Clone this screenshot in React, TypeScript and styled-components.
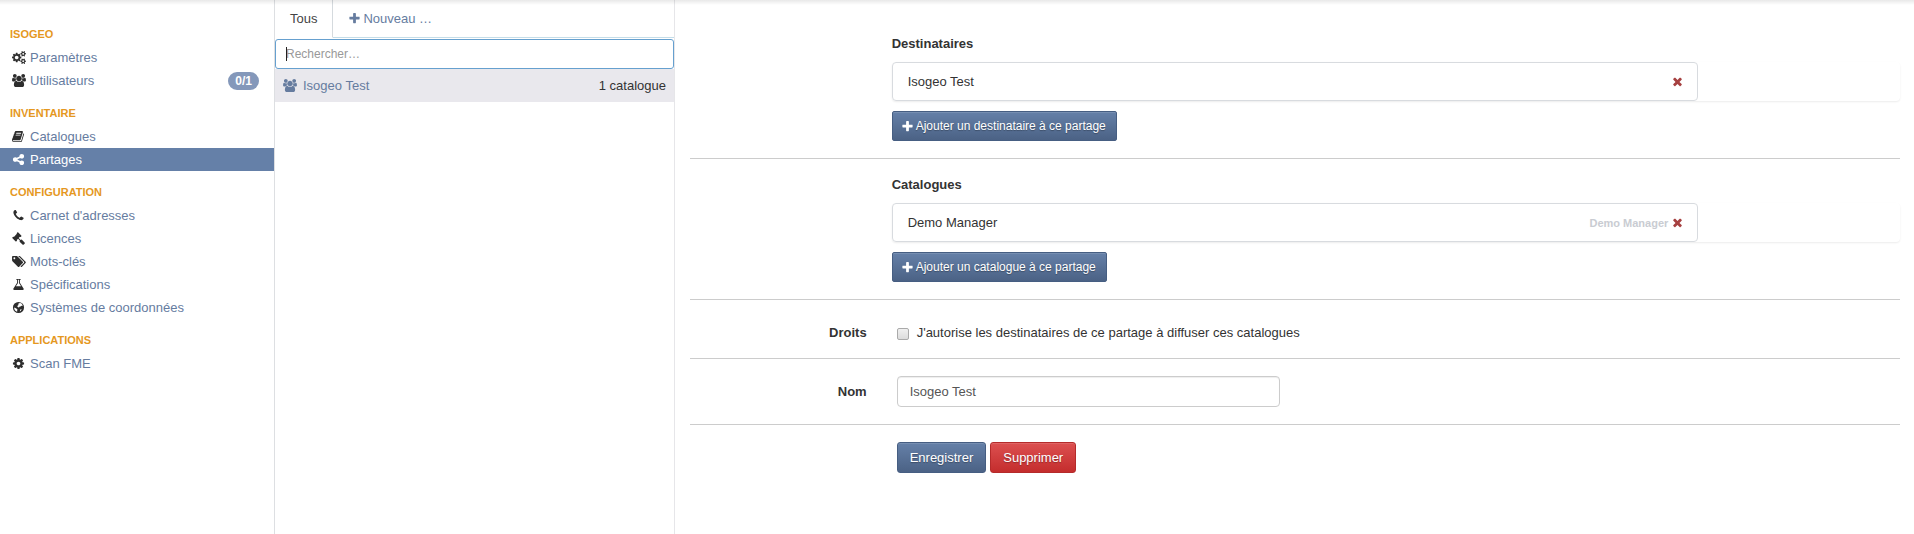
import React from "react";
import styled, { createGlobalStyle, css } from "styled-components";

const GlobalStyle = createGlobalStyle`
  *, *::before, *::after { box-sizing: border-box; }
  body {
    margin: 0;
    background: #fff;
    color: #333;
    font-family: "Liberation Sans", Arial, sans-serif;
    font-size: 13px;
    line-height: 18px;
  }
  a { color: #667c9f; text-decoration: none; }
  button, input { font: inherit; }
`;

type Glyph = { width: number; path: string };

const smallGear =
  "v140q0 16-149 31-12 27-30 52 51 113 51 138 0 4-4 7-122 71-124 71-8 0-46-47t-52-68q-20 2-30 2t-30-2q-14 21-52 68t-46 47q-2 0-124-71-4-3-4-7 0-25 51-138-18-25-30-52-149-15-149-31v-140q0-16 149-31 13-29 30-52-51-113-51-138 0-4 4-7 4-2 35-20t59-34 30-16q8 0 46 46.5t52 67.5q20-2 30-2t30 2q51-71 92-112l6-2q4 0 124 70 4 3 4 7 0 25-51 138 17 23 30 52 149 15 149 31z";

const glyphs = {
  cogs: {
    width: 1920,
    path:
      "M896 896q0-106-75-181t-181-75-181 75-75 181 75 181 181 75 181-75 75-181zm768 512q0-52-38-90t-90-38-90 38-38 90q0 53 37.5 90.5t90.5 37.5 90.5-37.5 37.5-90.5zm0-1024q0-52-38-90t-90-38-90 38-38 90q0 53 37.5 90.5t90.5 37.5 90.5-37.5 37.5-90.5zm-384 421v185q0 10-7 19.5t-16 10.5l-155 24q-11 35-32 76 34 48 90 115 7 10 7 20 0 12-7 19-23 30-82.5 89.5t-78.5 59.5q-11 0-21-7l-115-90q-37 19-77 31-11 108-23 155-7 24-30 24h-186q-11 0-20-7.5t-10-17.5l-23-153q-34-10-75-31l-118 89q-7 7-20 7-11 0-21-8-144-133-144-160 0-9 7-19 10-14 41-53t47-61q-23-44-35-82l-152-24q-10-1-17-9.5t-7-19.5v-185q0-10 7-19.5t16-10.5l155-24q11-35 32-76-34-48-90-115-7-11-7-20 0-12 7-20 22-30 82-89t79-59q11 0 21 7l115 90q34-18 77-32 11-108 23-154 7-24 30-24h186q11 0 20 7.5t10 17.5l23 153q34 10 75 31l118-89q8-7 20-7 11 0 21 8 144 133 144 160 0 9-7 19-12 16-42 54t-45 60q23 48 34 82l152 23q10 2 17 10.5t7 19.5z" +
      "M1920 1338" + smallGear + "M1920 314" + smallGear,
  },
  users: {
    width: 1920,
    path: "M593 896q-162 5-265 128h-134q-82 0-138-40.5t-56-118.5q0-353 124-353 6 0 43.5 21t97.5 42.5 119 21.5q67 0 133-23-5 37-5 66 0 139 81 256zm1071 637q0 120-73 189.5t-194 69.5h-874q-121 0-194-69.5t-73-189.5q0-53 3.5-103.5t14-109 26.5-108.5 43-97.5 62-81 85.5-53.5 111.5-20q10 0 43 21.5t73 48 107 48 135 21.5 135-21.5 107-48 73-48 43-21.5q61 0 111.5 20t85.5 53.5 62 81 43 97.5 26.5 108.5 14 109 3.5 103.5zm-1024-1277q0 106-75 181t-181 75-181-75-75-181 75-181 181-75 181 75 75 181zm704 384q0 159-112.5 271.5t-271.5 112.5-271.5-112.5-112.5-271.5 112.5-271.5 271.5-112.5 271.5 112.5 112.5 271.5zm576 225q0 78-56 118.5t-138 40.5h-134q-103-123-265-128 81-117 81-256 0-29-5-66 66 23 133 23 59 0 119-21.5t97.5-42.5 43.5-21q124 0 124 353zm-128-609q0 106-75 181t-181 75-181-75-75-181 75-181 181-75 181 75 75 181z",
  },
  book: {
    width: 1792,
    path: "M1639 478q40 57 18 129l-275 906q-19 64-76.5 107.5t-122.5 43.5h-923q-77 0-148.5-53.5t-99.5-131.5q-24-67-2-127 0-4 3-27t4-37q1-8-3-21.5t-3-19.5q2-11 8-21t16.5-23.5 16.5-23.5q23-38 45-91.5t30-91.5q3-10 .5-30t-.5-28q3-11 17-28t17-23q21-36 42-92t25-90q1-9-2.5-32t.5-28q4-13 22-30.5t22-22.5q19-26 42.5-84.5t27.5-96.5q1-8-3-25.5t-2-26.5q2-8 9-18t18-23 17-21q8-12 16.5-30.5t15-35 16-36 19.5-32 26.5-23.5 36-11.5 47.5 5.5l-1 3q38-9 51-9h761q74 0 114 56t18 130l-274 906q-36 119-71.5 153.5t-128.5 34.5h-869q-27 0-38 15-11 16-1 43 24 70 144 70h923q29 0 56-15.5t35-41.5l300-987q7-22 5-57 38 15 59 43zm-1064 2q-4 13 2 22.5t20 9.5h608q13 0 25.5-9.5t16.5-22.5l21-64q4-13-2-22.5t-20-9.5h-608q-13 0-25.5 9.5t-16.5 22.5zm-83 256q-4 13 2 22.5t20 9.5h608q13 0 25.5-9.5t16.5-22.5l21-64q4-13-2-22.5t-20-9.5h-608q-13 0-25.5 9.5t-16.5 22.5z",
  },
  share: {
    width: 1792,
    path: "M1344 1024q133 0 226.5 93.5t93.5 226.5-93.5 226.5-226.5 93.5-226.5-93.5-93.5-226.5q0-12 2-34l-360-180q-92 86-218 86-133 0-226.5-93.5t-93.5-226.5 93.5-226.5 226.5-93.5q126 0 218 86l360-180q-2-22-2-34 0-133 93.5-226.5t226.5-93.5 226.5 93.5 93.5 226.5-93.5 226.5-226.5 93.5q-126 0-218-86l-360 180q2 22 2 34t-2 34l360 180q92-86 218-86z",
  },
  phone: {
    width: 1792,
    path: "M1600 1240q0 27-10 70.5t-21 68.5q-21 50-122 106-94 51-186 51-27 0-53-3.5t-57.5-12.5-47-14.5-55.5-20.5-49-18q-98-35-175-83-127-79-264-216t-216-264q-48-77-83-175-3-9-18-49t-20.5-55.5-14.5-47-12.5-57.5-3.5-53q0-92 51-186 56-101 106-122 25-11 68.5-21t70.5-10q14 0 21 3 18 6 53 76 11 19 30 54t35 63.5 31 53.5q3 4 17.5 25t21.5 35.5 7 28.5q0 20-28.5 50t-62 55-62 53-28.5 46q0 9 5 22.5t8.5 20.5 14 24 11.5 19q76 137 174 235t235 174q2 1 19 11.5t24 14 20.5 8.5 22.5 5q18 0 46-28.5t53-62 55-62 50-28.5q14 0 28.5 7t35.5 21.5 25 17.5q25 15 53.5 31t63.5 35 54 30q70 35 76 53 3 7 3 21z",
  },
  gavel: {
    width: 1792,
    path: "M1771 1536q0 53-37 90l-107 108q-39 37-91 37-53 0-90-37l-363-364q-38-36-38-90 0-53 43-96l-256-256-126 126q-14 14-34 14t-34-14q2 2 12.5 12t12.5 13 10 11.5 10 13.5 6 13.5 5.5 16.5 1.5 18q0 38-28 68-3 3-16.5 18t-19 20.5-18.5 16.5-22 15.5-22 9-26 4.5q-40 0-68-28l-408-408q-28-28-28-68 0-13 4.5-26t9-22 15.5-22 16.5-18.5 20.5-19 18-16.5q30-28 68-28 10 0 18 1.5t16.5 5.5 13.5 6 13.5 10 11.5 10 13 12.5 12 12.5q-14-14-14-34t14-34l348-348q14-14 34-14t34 14q-2-2-12.5-12t-12.5-13-10-11.5-10-13.5-6-13.5-5.5-16.5-1.5-18q0-38 28-68 3-3 16.5-18t19-20.5 18.5-16.5 22-15.5 22-9 26-4.5q40 0 68 28l408 408q28 28 28 68 0 13-4.5 26t-9 22-15.5 22-16.5 18.5-20.5 19-18 16.5q-30 28-68 28-10 0-18-1.5t-16.5-5.5-13.5-6-13.5-10-11.5-10-13-12.5-12-12.5q14 14 14 34t-14 34l-126 126 256 256q43-43 96-43 52 0 91 37l363 363q37 39 37 91z",
  },
  tags: {
    width: 1920,
    path: "M448 448q0-53-37.5-90.5t-90.5-37.5-90.5 37.5-37.5 90.5 37.5 90.5 90.5 37.5 90.5-37.5 37.5-90.5zm1067 576q0 53-37 90l-491 492q-39 37-91 37-53 0-90-37l-715-716q-38-37-64.5-101t-26.5-117v-416q0-52 38-90t90-38h416q53 0 117 26.5t102 64.5l715 714q37 39 37 91zm384 0q0 53-37 90l-491 492q-39 37-91 37-36 0-59-14t-53-45l470-470q37-37 37-90 0-52-37-91l-715-714q-38-38-102-64.5t-117-26.5h224q53 0 117 26.5t102 64.5l715 714q37 39 37 91z",
  },
  flask: {
    width: 1792,
    path: "M1591 1448q56 89 21.5 152.5t-140.5 63.5h-1152q-106 0-140.5-63.5t21.5-152.5l503-793v-399h-64q-26 0-45-19t-19-45 19-45 45-19h512q26 0 45 19t19 45-19 45-45 19h-64v399zm-779-725l-272 429h712l-272-429-20-31v-436h-128v436z",
  },
  globe: {
    width: 1792,
    path: "M896 128a768 768 0 1 0 0 1536a768 768 0 1 0 0-1536zM950 300L1150 270L1340 390L1470 570L1400 700L1280 650L1180 770L1060 760L960 880L830 860L720 740L800 620L900 540L860 420ZM310 880L480 960L650 1060L760 1200L700 1340L720 1480L560 1420L400 1260L310 1080ZM1130 1180L1270 1120L1330 1180L1210 1360L1080 1450Z",
  },
  cog: {
    width: 1792,
    path: "M1152 896q0-106-75-181t-181-75-181 75-75 181 75 181 181 75 181-75 75-181zm512-109v222q0 12-8 23t-20 13l-185 28q-19 54-39 91 35 50 107 138 10 12 10 25t-9 23q-27 37-99 108t-94 71q-12 0-26-9l-138-108q-44 23-91 38-16 136-29 186-7 28-36 28h-222q-14 0-24.5-8.5t-11.5-21.5l-28-184q-49-16-90-37l-141 107q-10 9-25 9-14 0-25-11-126-114-165-168-7-10-7-23 0-12 8-23 15-21 51-66.5t54-70.5q-27-50-41-99l-183-27q-13-2-21-12.5t-8-23.5v-222q0-12 8-23t19-13l186-28q14-46 39-92-40-57-107-138-10-12-10-24 0-10 9-23 26-36 98.5-107.5t94.5-71.5q13 0 26 10l138 107q44-23 91-38 16-136 29-186 7-28 36-28h222q14 0 24.5 8.5t11.5 21.5l28 184q49 16 90 37l142-107q9-9 24-9 13 0 25 10 129 119 165 170 7 8 7 22 0 12-8 23-15 21-51 66.5t-54 70.5q26 50 41 98l183 28q13 2 21 12.5t8 23.5z",
  },
  plus: {
    width: 1792,
    path: "M1600 736v192q0 40-28 68t-68 28h-416v416q0 40-28 68t-68 28h-192q-40 0-68-28t-28-68v-416h-416q-40 0-68-28t-28-68v-192q0-40 28-68t68-28h416v-416q0-40 28-68t68-28h192q40 0 68 28t28 68v416h416q40 0 68 28t28 68z",
  },
  times: {
    width: 1792,
    path: "M1490 1322q0 40-28 68l-136 136q-28 28-68 28t-68-28l-294-294-294 294q-28 28-68 28t-68-28l-136-136q-28-28-28-68t28-68l294-294-294-294q-28-28-28-68t28-68l136-136q28-28 68-28t68 28l294 294 294-294q28-28 68-28t68 28l136 136q28 28 28 68t-28 68l-294 294 294 294q28 28 28 68z",
  },
} satisfies Record<string, Glyph>;

type GlyphName = keyof typeof glyphs;

const IconSvg = styled.svg`
  flex: none;
  height: 13px;
  fill: currentColor;
`;

function Icon({ name }: { name: GlyphName }) {
  const glyph = glyphs[name];
  return (
    <IconSvg
      viewBox={`0 0 ${glyph.width} 1792`}
      width={glyph.width > 1792 ? 14 : 13}
      aria-hidden="true"
      fillRule={name === "globe" ? "evenodd" : "nonzero"}
    >
      <path d={glyph.path} />
    </IconSvg>
  );
}

const Page = styled.div`
  position: relative;
  display: grid;
  grid-template-columns: 275px 400px 1fr;
  min-height: 100vh;
`;

const TopShadow = styled.div`
  position: absolute;
  inset: 0 0 auto;
  height: 5px;
  background: linear-gradient(rgba(0, 0, 0, 0.09), rgba(0, 0, 0, 0));
  pointer-events: none;
`;

const Sidebar = styled.nav`
  padding-top: 23px;
  border-right: 1px solid #dddfe2;
`;

const Group = styled.section`
  margin-bottom: 10px;
`;

const GroupTitle = styled.h2`
  margin: 0;
  padding-left: 10px;
  color: #e5981f;
  font-size: 11px;
  line-height: 23px;
  text-transform: uppercase;
`;

const Menu = styled.ul`
  margin: 0;
  padding: 0;
  list-style: none;
`;

const MenuLink = styled.a<{ $active?: boolean }>`
  display: flex;
  align-items: center;
  height: 23px;
  padding: 0 15px 0 10px;
  ${(p) => p.$active && css`
    background: #6580a8;
    color: #fff;
  `}
`;

const MenuIcon = styled.span<{ $active?: boolean }>`
  display: flex;
  justify-content: center;
  width: 17px;
  margin-right: 3px;
  color: ${(p) => (p.$active ? "#fff" : "#2d2d2d")};
`;

const Badge = styled.span`
  margin-left: auto;
  padding: 0 7px;
  border-radius: 9px;
  background: #8498ba;
  color: #fff;
  font-size: 12px;
  font-weight: bold;
`;

const ListPanel = styled.section`
  border-right: 1px solid #e6e6e9;
`;

const Tabs = styled.div`
  display: flex;
  height: 38px;
  margin-bottom: 1px;
`;

const Tab = styled.a<{ $active?: boolean }>`
  display: flex;
  align-items: center;
  gap: 2px;
  padding: 0 15px;
  border-bottom: 1px solid #c5dde8;
  ${(p) => p.$active && css`
    border-right: 1px solid #d5dade;
    border-bottom-color: transparent;
    color: #444;
  `}
`;

const TabFill = styled.div`
  flex: 1;
  border-bottom: 1px solid #c5dde8;
`;

const SearchBox = styled.div`
  position: relative;
`;

const SearchInput = styled.input`
  display: block;
  width: 100%;
  height: 30px;
  padding: 0 10px;
  border: 1px solid #66a0cf;
  border-radius: 3px;
  outline: none;
  background: #fff;
  color: #555;
  font-size: 12px;
  &::placeholder { color: #999; opacity: 1; }
`;

const Caret = styled.span`
  position: absolute;
  top: 8px;
  left: 11px;
  width: 1px;
  height: 14px;
  background: #222;
`;

const ResultRow = styled.a`
  display: flex;
  align-items: center;
  gap: 6px;
  height: 33px;
  padding: 0 8px;
  background: #e9e8ed;
`;

const ResultCount = styled.span`
  margin-left: auto;
  color: #333;
`;

const Main = styled.main`
  padding: 35px 14px 20px 15px;
`;

const ShareSection = styled.section`
  margin-left: calc(100% / 6);
`;

const SectionTitle = styled.h3`
  margin: 0 0 9px;
  font-size: 13px;
  line-height: 18px;
`;

const CardList = styled.ul`
  margin: 0 0 10px;
  padding: 0;
  border-radius: 4px;
  box-shadow: 0 1px 2px rgba(0, 0, 0, 0.08);
  list-style: none;
`;

const Card = styled.li`
  display: flex;
  align-items: center;
  width: 80%;
  height: 39px;
  padding: 0 13px 0 15px;
  border: 1px solid #d8dbdf;
  border-radius: 4px;
`;

const CardNote = styled.span`
  color: #c9ccd2;
  font-size: 11px;
  font-weight: bold;
  line-height: 16px;
`;

const CardActions = styled.div`
  display: flex;
  align-items: center;
  gap: 3px;
  margin-left: auto;
`;

const RemoveButton = styled.button`
  display: flex;
  padding: 0;
  border: 0;
  background: none;
  color: #a64040;
`;

const Button = styled.button<{ $tone?: "danger"; $small?: boolean }>`
  display: inline-flex;
  align-items: center;
  justify-content: center;
  height: 31px;
  padding: 0 12px;
  border: 1px solid #465e82;
  border-radius: 3px;
  background: linear-gradient(#6580a8, #4b6285);
  box-shadow: inset 0 1px 0 rgba(255, 255, 255, 0.12);
  color: #fff;
  text-shadow: 0 1px 1px rgba(0, 0, 0, 0.3);
  white-space: nowrap;
  ${(p) => p.$tone === "danger" && css`
    border-color: #b52b2b;
    background: linear-gradient(#dc5050, #c42d2d);
  `}
  ${(p) => p.$small && css`
    gap: 2px;
    height: 30px;
    padding: 0 10px 0 8px;
    border-radius: 2px;
    font-size: 12px;
  `}
`;

const Divider = styled.hr`
  height: 1px;
  margin: 17px 0;
  border: 0;
  background: #ccc;
`;

const FormRow = styled.div`
  display: grid;
  grid-template-columns: 2fr 4fr 6fr;
  margin: 0 -15px;
`;

const FormLabel = styled.label`
  padding: 7px 15px 0;
  font-weight: bold;
  line-height: 17px;
  text-align: right;
`;

const FormField = styled.div<{ $wide?: boolean }>`
  grid-column: ${(p) => (p.$wide ? "2 / 4" : "2")};
  padding: 0 15px;
`;

const CheckLabel = styled.label`
  display: flex;
  gap: 8px;
  padding-top: 7px;
  line-height: 17px;
`;

const Checkbox = styled.input`
  appearance: none;
  flex: none;
  width: 12px;
  height: 12px;
  margin: 4px 0 0;
  border: 1px solid #aaa;
  border-radius: 2px;
  background: linear-gradient(#f0f0f0, #dcdcdc);
`;

const TextInput = styled.input`
  display: block;
  width: 100%;
  height: 31px;
  padding: 0 12px;
  border: 1px solid #ccc;
  border-radius: 4px;
  box-shadow: inset 0 1px 1px rgba(0, 0, 0, 0.07);
  color: #555;
`;

const ButtonBar = styled.div`
  display: flex;
  gap: 4px;
`;

type MenuEntry = { icon: GlyphName; label: string; badge?: string; active?: boolean };

const menuGroups: { title: string; entries: MenuEntry[] }[] = [
  {
    title: "Isogeo",
    entries: [
      { icon: "cogs", label: "Paramètres" },
      { icon: "users", label: "Utilisateurs", badge: "0/1" },
    ],
  },
  {
    title: "Inventaire",
    entries: [
      { icon: "book", label: "Catalogues" },
      { icon: "share", label: "Partages", active: true },
    ],
  },
  {
    title: "Configuration",
    entries: [
      { icon: "phone", label: "Carnet d'adresses" },
      { icon: "gavel", label: "Licences" },
      { icon: "tags", label: "Mots-clés" },
      { icon: "flask", label: "Spécifications" },
      { icon: "globe", label: "Systèmes de coordonnées" },
    ],
  },
  { title: "Applications", entries: [{ icon: "cog", label: "Scan FME" }] },
];

function ShareList(props: { title: string; item: string; note?: string; action: string }) {
  return (
    <ShareSection>
      <SectionTitle>{props.title}</SectionTitle>
      <CardList>
        <Card>
          {props.item}
          <CardActions>
            {props.note && <CardNote>{props.note}</CardNote>}
            <RemoveButton type="button" aria-label={`Retirer ${props.item}`}>
              <Icon name="times" />
            </RemoveButton>
          </CardActions>
        </Card>
      </CardList>
      <Button type="button" $small>
        <Icon name="plus" />
        {props.action}
      </Button>
    </ShareSection>
  );
}

export default function App() {
  return (
    <>
      <GlobalStyle />
      <Page>
        <Sidebar>
          {menuGroups.map((group) => (
            <Group key={group.title}>
              <GroupTitle>{group.title}</GroupTitle>
              <Menu>
                {group.entries.map((entry) => (
                  <li key={entry.label}>
                    <MenuLink href="#" $active={entry.active}>
                      <MenuIcon $active={entry.active}>
                        <Icon name={entry.icon} />
                      </MenuIcon>
                      {entry.label}
                      {entry.badge && <Badge>{entry.badge}</Badge>}
                    </MenuLink>
                  </li>
                ))}
              </Menu>
            </Group>
          ))}
        </Sidebar>

        <ListPanel>
          <Tabs>
            <Tab href="#" $active>Tous</Tab>
            <Tab href="#">
              <Icon name="plus" />
              Nouveau …
            </Tab>
            <TabFill />
          </Tabs>
          <SearchBox>
            <SearchInput type="text" placeholder="Rechercher…" aria-label="Rechercher" />
            <Caret />
          </SearchBox>
          <ResultRow href="#">
            <Icon name="users" />
            Isogeo Test
            <ResultCount>1 catalogue</ResultCount>
          </ResultRow>
        </ListPanel>

        <Main>
          <ShareList
            title="Destinataires"
            item="Isogeo Test"
            action="Ajouter un destinataire à ce partage"
          />
          <Divider />
          <ShareList
            title="Catalogues"
            item="Demo Manager"
            note="Demo Manager"
            action="Ajouter un catalogue à ce partage"
          />
          <Divider />
          <FormRow>
            <FormLabel htmlFor="rights">Droits</FormLabel>
            <FormField $wide>
              <CheckLabel>
                <Checkbox id="rights" type="checkbox" />
                J'autorise les destinataires de ce partage à diffuser ces catalogues
              </CheckLabel>
            </FormField>
          </FormRow>
          <Divider />
          <FormRow>
            <FormLabel htmlFor="name">Nom</FormLabel>
            <FormField>
              <TextInput id="name" type="text" defaultValue="Isogeo Test" />
            </FormField>
          </FormRow>
          <Divider />
          <FormRow>
            <FormField $wide>
              <ButtonBar>
                <Button type="submit">Enregistrer</Button>
                <Button type="button" $tone="danger">Supprimer</Button>
              </ButtonBar>
            </FormField>
          </FormRow>
        </Main>
        <TopShadow />
      </Page>
    </>
  );
}
